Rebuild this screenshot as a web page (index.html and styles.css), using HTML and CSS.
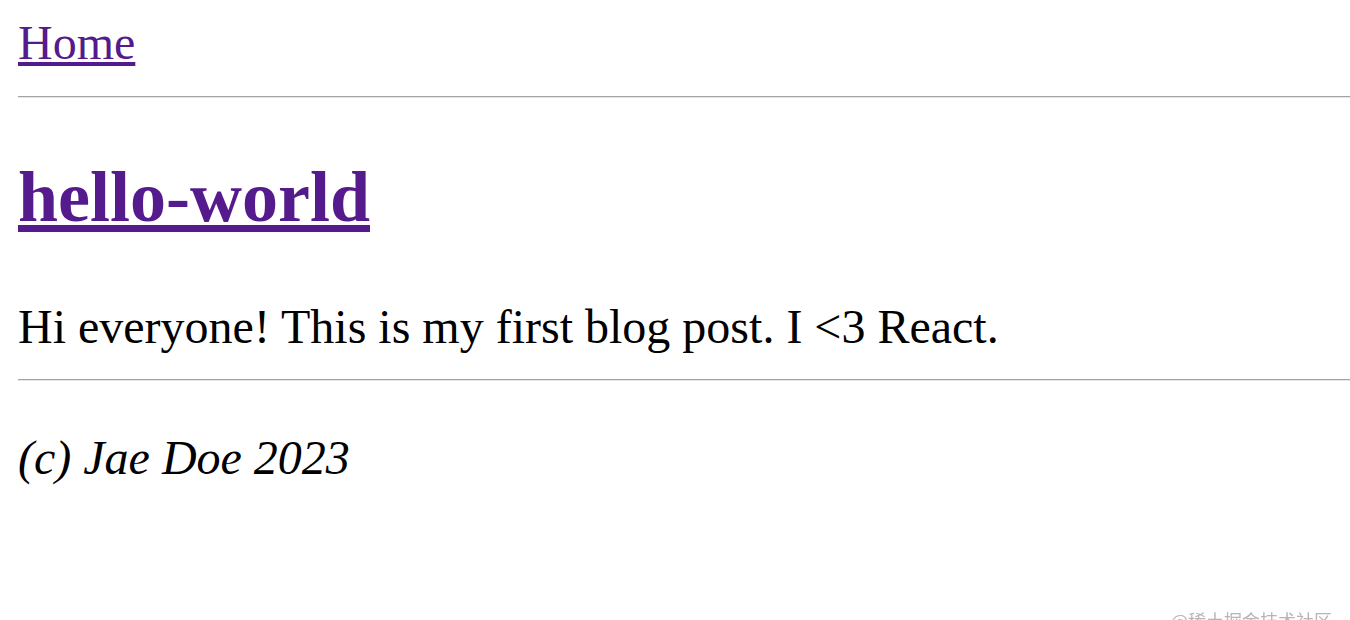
FILE: index.html
```html
<!DOCTYPE html>
<html lang="en">
<head>
  <meta charset="UTF-8">
  <title>hello-world</title>
  <link rel="stylesheet" href="styles.css">
</head>
<body>
  <nav class="site-nav">
    <a href="#" class="nav-link">Home</a>
  </nav>
  <hr class="rule rule-top">

  <article class="post">
    <h1 class="post-title"><a href="#" class="post-link">hello-world</a></h1>
    <p class="post-body">Hi everyone! This is my first blog post. I &lt;3 React.</p>
  </article>

  <hr class="rule rule-bottom">
  <footer class="site-footer">
    <i>(c) Jae Doe 2023</i>
  </footer>

  <div class="watermark">@稀土掘金技术社区</div>
</body>
</html>
```

FILE: styles.css
```css
body {
  margin: 0 0 0 18px;
  padding-top: 15px;
  font-family: "Liberation Serif", "Times New Roman", serif;
  font-size: 48px;
  line-height: 56px;
  color: #000;
  background: #fff;
}

a {
  color: #551a8b;
}

.site-nav {
  height: 56px;
}

.rule {
  margin: 0;
  height: 0;
  border: none;
  border-top: 1px solid #a3a3a3;
  border-bottom: 1px solid #e6e6e6;
}

.rule-top {
  margin-top: 25px;
}

.post-title {
  margin: 58px 0 0;
  font-size: 72px;
  line-height: 83px;
  font-weight: bold;
}

.post-body {
  margin: 60px 0 24px;
}

.site-footer {
  margin-top: 49px;
}

.watermark {
  position: fixed;
  right: 18px;
  bottom: -12px;
  font-family: "Noto Sans CJK SC", sans-serif;
  font-size: 18px;
  line-height: 24px;
  color: #b5b5b5;
}
```
